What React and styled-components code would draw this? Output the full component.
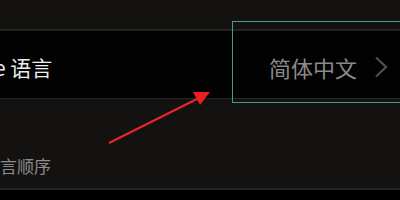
import styled, { createGlobalStyle } from "styled-components";

const GlobalStyle = createGlobalStyle`
  html, body {
    margin: 0;
    padding: 0;
    background: #000;
    overflow: hidden;
  }
`

const Page = styled.div`
  position: relative;
  width: 400px;
  height: 200px;
  overflow: hidden;
  display: flex;
  flex-direction: column;
  background: #000;
  font-family: "Noto Sans CJK SC", "Noto Sans", sans-serif;
`

const Band = styled.div`
  height: ${(p) => p.$h}px;
  flex-shrink: 0;
  background: #131210;
  border-bottom: 2px solid #232321;
  display: flex;
  align-items: flex-end;
  box-sizing: border-box;
  padding-bottom: ${(p) => p.$pb || 0}px;
`

const Row = styled.div`
  height: 68px;
  flex-shrink: 0;
  background: #020202;
  border-bottom: 1px solid #262624;
  box-sizing: border-box;
  display: flex;
  align-items: center;
  justify-content: space-between;
  padding: 4px 12px 0 0;
`

const Label = styled.span`
  margin-left: -6px;
  font-size: 21px;
  color: #ececec;
  white-space: nowrap;
`

const Value = styled.div`
  display: flex;
  align-items: center;
  gap: 17px;
  font-size: 22px;
  color: #8a8a8a;
`

const SectionTitle = styled.span`
  margin-left: -17px;
  font-size: 17px;
  color: #8c8c8c;
  white-space: nowrap;
`

const Highlight = styled.div`
  position: absolute;
  left: 232px;
  top: 21px;
  width: 175px;
  height: 82px;
  border: 1.5px solid #3f9c90;
  box-sizing: border-box;
  pointer-events: none;
`

const Arrow = styled.svg`
  position: absolute;
  left: 0;
  top: 0;
  pointer-events: none;
`

function Chevron() {
  return (
    <svg width="14" height="22" viewBox="0 0 14 22">
      <polyline points="2,1.5 12,11 2,20.5" fill="none" stroke="#505050" strokeWidth="2.2" />
    </svg>
  )
}

function App() {
  return (
    <>
      <GlobalStyle />
      <Page>
        <Band $h={31} />
        <Row>
          <Label>e 语言</Label>
          <Value>
            简体中文
            <Chevron />
          </Value>
        </Row>
        <Band $h={91} $pb={10}>
          <SectionTitle>语言顺序</SectionTitle>
        </Band>
        <Highlight />
        <Arrow width="400" height="200">
          <line x1="109" y1="143" x2="199" y2="98" stroke="#e2262b" strokeWidth="2.2" />
          <polygon points="193,92 210,92 200,105" fill="#ee1c25" />
        </Arrow>
      </Page>
    </>
  )
}

export default App
